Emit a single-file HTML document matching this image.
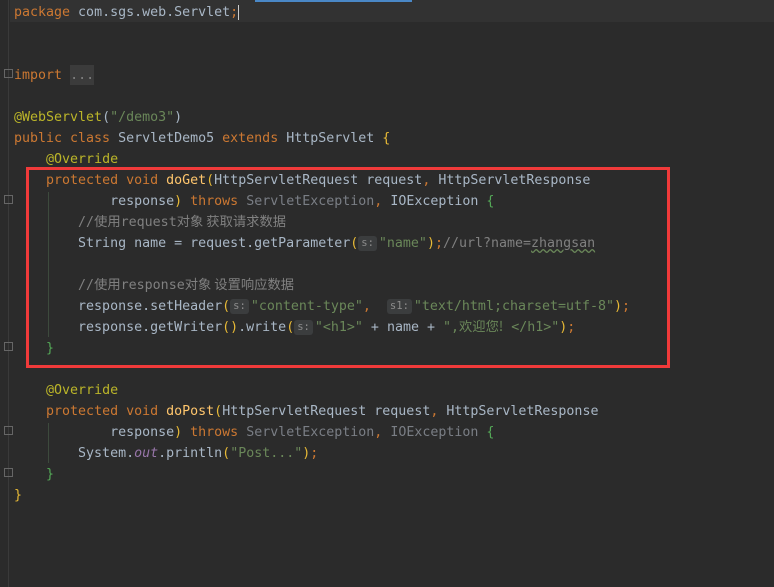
<!DOCTYPE html>
<html><head><meta charset="utf-8"><style>
body{margin:0;width:774px;height:587px;background:#2b2b2b;overflow:hidden;position:relative;font-family:"DejaVu Sans Mono","Liberation Mono","Noto Sans CJK SC",monospace;font-size:13.3px;color:#a9b7c6}
.l{position:absolute;left:14px;height:21px;line-height:21px;white-space:pre;margin-top:1px}
.k{color:#cc7832}.s{color:#6a8759}.a{color:#bbb529}.c{color:#808080}.f{color:#ffc66d}.g{color:#7a7e85}.o{color:#9876aa;font-style:italic}.y{color:#e8ba36}.gb{color:#54a857}
.h{display:inline-block;background:#3b3d3e;color:#8c8c8c;font-size:10.5px;line-height:15px;height:15px;padding:0 3px;border-radius:3px;margin:0 2px 0 0;vertical-align:top;margin-top:3px}
.cjk{font-family:"Noto Sans CJK SC",sans-serif;font-size:13.3px;line-height:1}
</style></head><body>
<div style="position:absolute;left:10px;top:0;width:764px;height:22px;background:#323232"></div>
<div style="position:absolute;left:255px;top:0;width:157px;height:2px;background:#4a88c7"></div>
<div style="position:absolute;left:8px;top:0;width:1px;height:587px;background:#3a3a3a"></div>
<div style="position:absolute;left:70px;top:65px;width:24px;height:20px;background:#3b3b3b"></div>
<div style="position:absolute;left:48px;top:192px;width:1px;height:145px;background:#3d4a3d"></div>
<div style="position:absolute;left:48px;top:423px;width:1px;height:40px;background:#3d4a3d"></div>
<div style="position:absolute;left:4px;top:69px;width:7px;height:7px;border:1px solid #666"></div>
<div style="position:absolute;left:4px;top:195px;width:7px;height:7px;border:1px solid #666"></div>
<div style="position:absolute;left:4px;top:342px;width:7px;height:7px;border:1px solid #666"></div>
<div style="position:absolute;left:4px;top:426px;width:7px;height:7px;border:1px solid #666"></div>
<div style="position:absolute;left:4px;top:468px;width:7px;height:7px;border:1px solid #666"></div>
<div class="l" style="top:1px"><span class="k">package</span> com.sgs.web.Servlet<span class="k">;</span><span style="border-left:1px solid #ccc"></span></div>
<div class="l" style="top:64px"><span class="k">import</span> <span class="c">...</span></div>
<div class="l" style="top:106px"><span class="a">@WebServlet</span>(<span class="s">"/demo3"</span>)</div>
<div class="l" style="top:127px"><span class="k">public class</span> ServletDemo5 <span class="k">extends</span> HttpServlet <span class="y">{</span></div>
<div class="l" style="top:148px">    <span class="a">@Override</span></div>
<div class="l" style="top:169px">    <span class="k">protected void</span> <span class="f">doGet</span><span class="y">(</span>HttpServletRequest request<span class="k">,</span> HttpServletResponse</div>
<div class="l" style="top:190px">            response<span class="y">)</span> <span class="k">throws</span> <span class="g">ServletException</span><span class="k">,</span> IOException <span class="gb">{</span></div>
<div class="l" style="top:211px">        <span class="c">//<span class="cjk">使用</span>request<span class="cjk">对象 获取请求数据</span></span></div>
<div class="l" style="top:232px">        String name = request.getParameter<span class="y">(</span><span class="h">s:</span><span class="s">"name"</span><span class="y">)</span><span class="k">;</span><span class="c">//url?name=<span style="text-decoration:underline wavy #6a8759">zhangsan</span></span></div>
<div class="l" style="top:274px">        <span class="c">//<span class="cjk">使用</span>response<span class="cjk">对象 设置响应数据</span></span></div>
<div class="l" style="top:295px">        response.setHeader<span class="y">(</span><span class="h">s:</span><span class="s">"content-type"</span><span class="k">,</span>  <span class="h">s1:</span><span class="s">"text/html;charset=utf-8"</span><span class="y">)</span><span class="k">;</span></div>
<div class="l" style="top:316px">        response.getWriter<span class="y">()</span>.write<span class="y">(</span><span class="h">s:</span><span class="s">"&lt;h1&gt;"</span> + name + <span class="s">",<span class="cjk">欢迎您!</span> &lt;/h1&gt;"</span><span class="y">)</span><span class="k">;</span></div>
<div class="l" style="top:337px">    <span class="gb">}</span></div>
<div class="l" style="top:379px">    <span class="a">@Override</span></div>
<div class="l" style="top:400px">    <span class="k">protected void</span> <span class="f">doPost</span><span class="y">(</span>HttpServletRequest request<span class="k">,</span> HttpServletResponse</div>
<div class="l" style="top:421px">            response<span class="y">)</span> <span class="k">throws</span> <span class="g">ServletException</span><span class="k">,</span> <span class="g">IOException</span> <span class="gb">{</span></div>
<div class="l" style="top:442px">        System.<span class="o">out</span>.println<span class="y">(</span><span class="s">"Post..."</span><span class="y">)</span><span class="k">;</span></div>
<div class="l" style="top:463px">    <span class="gb">}</span></div>
<div class="l" style="top:484px"><span class="y">}</span></div>
<div style="position:absolute;left:26px;top:167px;width:638px;height:195px;border:3px solid #f03a3a"></div>
</body></html>
